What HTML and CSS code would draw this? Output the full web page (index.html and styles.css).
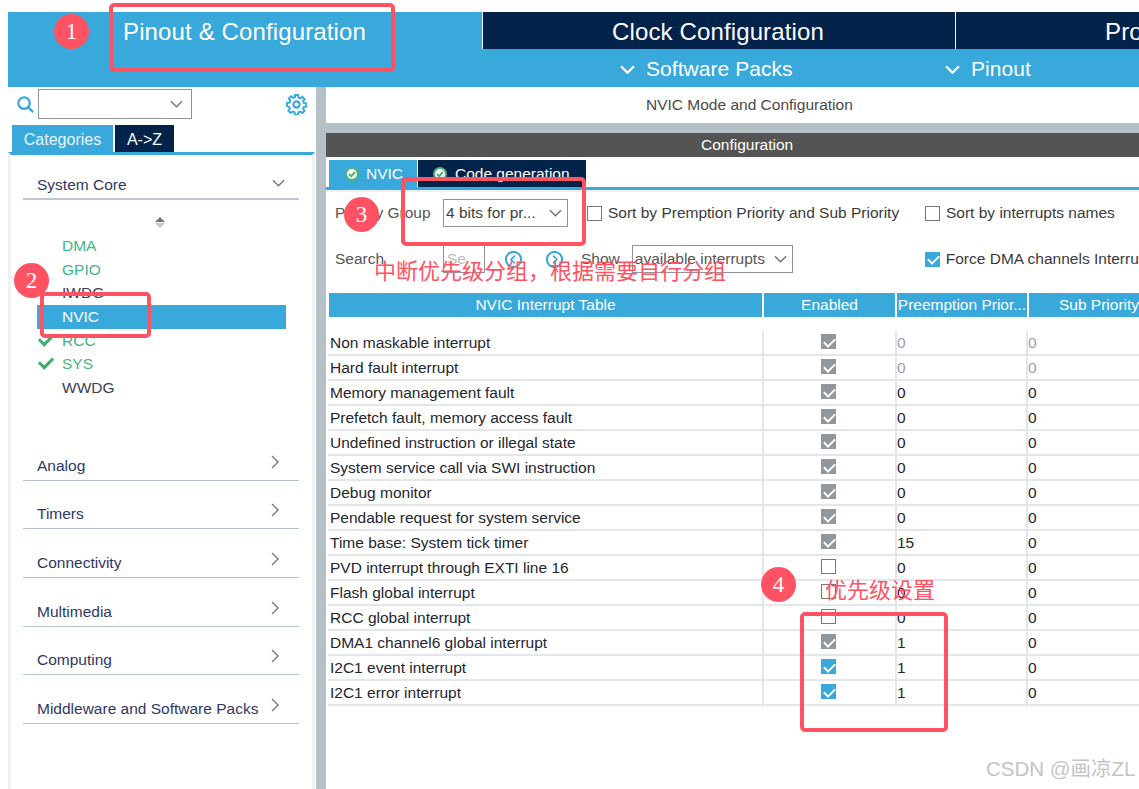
FILE: index.html
```html
<!DOCTYPE html>
<html lang="en">
<head>
    <meta charset="UTF-8">
    <meta name="viewport" content="width=device-width, initial-scale=1.0">
    <title>NVIC Mode and Configuration</title>
    <link rel="stylesheet" href="styles.css">
</head>
<body>
    <svg class="defs" width="0" height="0">
        <symbol id="chev-down" viewBox="0 0 14 8"><path d="M1 1l6 6 6-6" fill="none" stroke="currentColor"/></symbol>
        <symbol id="chev-right" viewBox="0 0 8 14"><path d="M1 1l6 6-6 6" fill="none" stroke="currentColor"/></symbol>
        <symbol id="ok" viewBox="0 0 14 14"><circle cx="7" cy="7" r="6" fill="#fff" stroke="#4cb27a" stroke-width="2"/><path d="M4 7l2.2 2.2L10 5" fill="none" stroke="#4cb27a" stroke-width="2"/></symbol>
    </svg>

    <header class="topbar">
        <nav class="main-tabs">
            <div class="main-tab active">Pinout &amp; Configuration</div>
            <div class="main-tab clock">Clock Configuration</div>
            <div class="main-tab project">Project Manager</div>
        </nav>
        <div class="sub-menu">
            <div class="sub-item packs"><svg class="sub-chev"><use href="#chev-down"/></svg>Software Packs</div>
            <div class="sub-item"><svg class="sub-chev"><use href="#chev-down"/></svg>Pinout</div>
        </div>
    </header>

    <div class="workspace">
        <aside class="sidebar">
            <div class="search-row">
                <svg class="search-icon" viewBox="0 0 20 20"><circle cx="8.5" cy="8.5" r="6" fill="none" stroke="#39a9dc" stroke-width="2.4"/><path d="M13 13l5 5" stroke="#39a9dc" stroke-width="2.4"/></svg>
                <div class="search-box"><svg class="chev"><use href="#chev-down"/></svg></div>
                <svg class="gear" viewBox="0 0 20 20"><path d="M8.5 1h3l.4 2.4 1.7.7 2-1.400 2.100 2.100-1.400 2 .7 1.700 2.400.4v3l-2.400.4-.7 1.700 1.400 2-2.100 2.100-2-1.400-1.700.7-.4 2.400h-3l-.4-2.400-1.700-.7-2 1.400-2.100-2.100 1.400-2-.7-1.700L1 11.500v-3l2.400-.4.7-1.700-1.400-2 2.100-2.100 2 1.400 1.700-.7z" fill="none" stroke="#39a9dc" stroke-width="1.900"/><circle cx="10" cy="10" r="3" fill="none" stroke="#39a9dc" stroke-width="2"/></svg>
            </div>
            <div class="side-tabs">
                <div class="side-tab active">Categories</div>
                <div class="side-tab">A-&gt;Z</div>
            </div>
            <div class="side-panel">
                <div class="group open">
                    <span>System Core</span>
                    <svg class="chev"><use href="#chev-down"/></svg>
                </div>
                <div class="sort-arrows"></div>
                <ul class="periph-list">
                    <li class="ready">DMA</li>
                    <li class="ready">GPIO</li>
                    <li>IWDG</li>
                    <li class="selected">NVIC</li>
                    <li class="ready checked">RCC</li>
                    <li class="ready checked">SYS</li>
                    <li>WWDG</li>
                </ul>
                <div class="group"><span>Analog</span><svg class="chev-r"><use href="#chev-right"/></svg></div>
                <div class="group"><span>Timers</span><svg class="chev-r"><use href="#chev-right"/></svg></div>
                <div class="group"><span>Connectivity</span><svg class="chev-r"><use href="#chev-right"/></svg></div>
                <div class="group"><span>Multimedia</span><svg class="chev-r"><use href="#chev-right"/></svg></div>
                <div class="group"><span>Computing</span><svg class="chev-r"><use href="#chev-right"/></svg></div>
                <div class="group"><span>Middleware and Software Packs</span><svg class="chev-r"><use href="#chev-right"/></svg></div>
            </div>
        </aside>

        <main class="content">
            <div class="mode-title">NVIC Mode and Configuration</div>
            <div class="config-title">Configuration</div>
            <div class="config-tabs">
                <div class="config-tab active"><svg class="ok"><use href="#ok"/></svg>NVIC</div>
                <div class="config-tab code"><svg class="ok"><use href="#ok"/></svg>Code generation</div>
            </div>
            <div class="form-row first">
                <label class="form-label">Priority Group</label>
                <div class="select group-select">4 bits for pr...<svg class="chev"><use href="#chev-down"/></svg></div>
                <span class="check off sort-a"></span><span class="check-text sort-a-text">Sort by Premption Priority and Sub Priority</span>
                <span class="check off"></span><span class="check-text">Sort by interrupts names</span>
            </div>
            <div class="form-row second">
                <label class="form-label">Search</label>
                <div class="search-input">Se</div>
                <svg class="nav-btn first-nav" viewBox="0 0 20 20"><circle cx="10" cy="10" r="8" fill="none" stroke="#39a9dc" stroke-width="2.200"/><path d="M11.500 6l-4 4 4 4" fill="none" stroke="#39a9dc" stroke-width="1.800"/></svg>
                <svg class="nav-btn" viewBox="0 0 20 20"><circle cx="10" cy="10" r="8" fill="none" stroke="#39a9dc" stroke-width="2.200"/><path d="M8.500 6l4 4-4 4" fill="none" stroke="#39a9dc" stroke-width="1.800"/></svg>
                <label class="show-label">Show</label>
                <div class="select show-select">available interrupts<svg class="chev"><use href="#chev-down"/></svg></div>
                <span class="check blue force"></span><span class="check-text">Force DMA channels Interrupts</span>
            </div>

            <div class="nvic-head">
                <div>NVIC Interrupt Table</div>
                <div>Enabled</div>
                <div>Preemption Prior...</div>
                <div>Sub Priority</div>
            </div>
            <div class="nvic-table">
                <div class="nvic-row"><div>Non maskable interrupt</div><div><span class="check grey"></span></div><div class="num dim">0</div><div class="num dim">0</div></div>
                <div class="nvic-row"><div>Hard fault interrupt</div><div><span class="check grey"></span></div><div class="num dim">0</div><div class="num dim">0</div></div>
                <div class="nvic-row"><div>Memory management fault</div><div><span class="check grey"></span></div><div class="num">0</div><div class="num">0</div></div>
                <div class="nvic-row"><div>Prefetch fault, memory access fault</div><div><span class="check grey"></span></div><div class="num">0</div><div class="num">0</div></div>
                <div class="nvic-row"><div>Undefined instruction or illegal state</div><div><span class="check grey"></span></div><div class="num">0</div><div class="num">0</div></div>
                <div class="nvic-row"><div>System service call via SWI instruction</div><div><span class="check grey"></span></div><div class="num">0</div><div class="num">0</div></div>
                <div class="nvic-row"><div>Debug monitor</div><div><span class="check grey"></span></div><div class="num">0</div><div class="num">0</div></div>
                <div class="nvic-row"><div>Pendable request for system service</div><div><span class="check grey"></span></div><div class="num">0</div><div class="num">0</div></div>
                <div class="nvic-row"><div>Time base: System tick timer</div><div><span class="check grey"></span></div><div class="num">15</div><div class="num">0</div></div>
                <div class="nvic-row"><div>PVD interrupt through EXTI line 16</div><div><span class="check off"></span></div><div class="num">0</div><div class="num">0</div></div>
                <div class="nvic-row"><div>Flash global interrupt</div><div><span class="check off"></span></div><div class="num">0</div><div class="num">0</div></div>
                <div class="nvic-row"><div>RCC global interrupt</div><div><span class="check off"></span></div><div class="num">0</div><div class="num">0</div></div>
                <div class="nvic-row"><div>DMA1 channel6 global interrupt</div><div><span class="check grey"></span></div><div class="num">1</div><div class="num">0</div></div>
                <div class="nvic-row"><div>I2C1 event interrupt</div><div><span class="check blue"></span></div><div class="num">1</div><div class="num">0</div></div>
                <div class="nvic-row"><div>I2C1 error interrupt</div><div><span class="check blue"></span></div><div class="num">1</div><div class="num">0</div></div>
            </div>
        </main>
    </div>

    <!-- annotations drawn on top of the screenshot -->
    <div class="mark box-1"></div>
    <div class="mark box-2"></div>
    <div class="mark box-3"></div>
    <div class="mark box-4"></div>
    <div class="badge badge-1">1</div>
    <div class="badge badge-2">2</div>
    <div class="badge badge-3">3</div>
    <div class="badge badge-4">4</div>
    <div class="note note-3">中断优先级分组，根据需要自行分组</div>
    <div class="note note-4">优先级设置</div>
    <div class="watermark">CSDN @画凉ZL</div>
</body>
</html>
```

FILE: styles.css
```css
* {
    box-sizing: border-box;
}
html, body {
    height: 100%;
}
body {
    margin: 0;
    padding: 12px 0 0 8px;
    position: relative;
    overflow: hidden;
    background: #fff;
    color: #2d3142;
    font-family: "Liberation Sans", Arial, sans-serif;
    font-size: 15.5px;
    display: flex;
    flex-direction: column;
}
.defs {
    position: absolute;
}

/* top bar */
.topbar {
    flex: none;
    height: 75px;
    background: #39a9dc;
    color: #fff;
    white-space: nowrap;
}
.main-tabs {
    display: flex;
    height: 37px;
}
.main-tab {
    flex: none;
    width: 473px;
    border-left: 1px solid #fff;
    background: #03234b;
    font-size: 24px;
    letter-spacing: 0.13px;
    line-height: 40px;
    text-align: center;
}
.main-tab.active {
    width: 474px;
    border-left: 0;
    background: #39a9dc;
    padding-left: 115px;
    text-align: left;
}
.main-tab.clock {
    padding-right: 2px;
}
.main-tab.project {
    text-align: left;
    padding-left: 149px;
    width: 400px;
}
.sub-menu {
    display: flex;
    height: 38px;
    align-items: center;
    padding: 2px 0 0 612px;
    font-size: 21px;
    letter-spacing: 0.05px;
}
.sub-item {
    display: flex;
    align-items: center;
}
.sub-item.packs {
    width: 325px;
}
.sub-chev {
    width: 15px;
    height: 9px;
    margin-right: 11px;
    color: #fff;
    stroke-width: 2.2;
}

.workspace {
    flex: 1;
    display: flex;
    min-height: 0;
}

/* left side */
.sidebar {
    flex: none;
    width: 308px;
    display: flex;
    flex-direction: column;
}
.search-row {
    flex: none;
    height: 38px;
    display: flex;
    align-items: center;
    padding: 0 7px 4px 8px;
}
.search-icon {
    width: 19px;
    height: 19px;
    margin-right: 3px;
}
.search-box {
    width: 154px;
    height: 30px;
    border: 1px solid #8e9499;
    display: flex;
    align-items: center;
    justify-content: flex-end;
    padding-right: 8px;
}
.chev {
    flex: none;
    width: 13px;
    height: 8px;
    color: #6d7277;
    stroke-width: 1.4;
}
.gear {
    width: 21px;
    height: 21px;
    margin-left: auto;
    margin-right: 2px;
}
.side-tabs {
    flex: none;
    display: flex;
    height: 27px;
    padding-left: 4px;
    gap: 2px;
    font-size: 16px;
    line-height: 29px;
    color: #fff;
}
.side-tab {
    width: 59px;
    text-align: center;
    background: #03234b;
}
.side-tab.active {
    width: 101px;
    background: #39a9dc;
    color: #e8f5fb;
}
.side-panel {
    flex: 1;
    border-top: 3px solid #39a9dc;
    border-left: 3px solid #f0f0f0;
    border-right: 3px solid #f0f0f0;
    padding: 0 13px 0 12px;
    margin-right: 1px;
}
.group {
    height: 48.7px;
    border-bottom: 1px solid #b5c0d0;
    display: flex;
    align-items: flex-end;
    justify-content: space-between;
    padding: 0 20px 4px 14px;
    color: #2f3768;
    line-height: 20px;
}
.group.open {
    height: 45px;
    border-bottom: 2px solid #b8c6de;
    padding: 0 14px 3px 14px;
}
.group .chev {
    margin-bottom: 8px;
    color: #777;
}
.chev-r {
    flex: none;
    width: 8px;
    height: 14px;
    margin-bottom: 7px;
    color: #777;
    stroke-width: 1.4;
}
.sort-arrows {
    height: 34px;
    position: relative;
}
.sort-arrows::before, .sort-arrows::after {
    content: "";
    position: absolute;
    left: 132px;
    border: 5px solid transparent;
    border-top-width: 0;
    border-bottom: 5px solid #70757a;
    top: 17px;
}
.sort-arrows::after {
    top: 23px;
    border-bottom-width: 0;
    border-top: 5px solid #c4c8cb;
}
.periph-list {
    list-style: none;
    margin: 0 0 32px;
    padding: 0 0 0 14px;
    width: 263px;
}
.periph-list li {
    height: 23.7px;
    line-height: 24px;
    padding-left: 25px;
    color: #3b3f55;
    position: relative;
}
.periph-list li.ready {
    color: #3fb585;
}
.periph-list li.selected {
    background: #39a9dc;
    color: #fff;
}
.periph-list li.checked::before {
    content: "";
    position: absolute;
    left: 2px;
    top: 5px;
    width: 11px;
    height: 6px;
    border-left: 3px solid #3fae70;
    border-bottom: 3px solid #3fae70;
    transform: rotate(-45deg);
}

/* right side */
.content {
    flex: 1;
    min-width: 0;
    border-left: 10px solid #b5c0c7;
    display: flex;
    flex-direction: column;
    white-space: nowrap;
}
.mode-title {
    flex: none;
    height: 36px;
    line-height: 36px;
    padding-left: 320px;
    color: #4a4a4a;
}
.config-title {
    flex: none;
    height: 34px;
    border-top: 10px solid #b5c0c7;
    background: #535453;
    color: #fff;
    line-height: 24px;
    padding-left: 375px;
}
.config-tabs {
    flex: none;
    display: flex;
    height: 33px;
    padding: 3px 0 0 3px;
    border-bottom: 3px solid #39a9dc;
    line-height: 29px;
    color: #fff;
    background: #fff;
}
.config-tab {
    width: 88px;
    height: 27px;
    background: #39a9dc;
    display: flex;
    align-items: center;
    padding-left: 16px;
}
.config-tab.code {
    width: 168px;
    margin-left: 1px;
    background: #03234b;
    padding-left: 15px;
}
.ok {
    width: 14px;
    height: 14px;
    margin-right: 7px;
    flex: none;
}
.config-tab.code .ok {
    margin-right: 8px;
}
.form-row {
    flex: none;
    display: flex;
    align-items: center;
    padding-left: 9px;
    color: #3a3a3a;
}
.form-row > * {
    flex: none;
}
.form-row.first {
    height: 44px;
    border-top: 2px solid #eef0f2;
}
.form-row.second {
    height: 50px;
}
.form-label {
    width: 108px;
    color: #555;
}
.select {
    height: 28px;
    border: 1px solid #8e9499;
    display: flex;
    align-items: center;
    justify-content: space-between;
    padding: 0 5px 0 2px;
    color: #404040;
}
.group-select {
    width: 125px;
}
.show-select {
    width: 161px;
    margin-left: 12px;
    color: #555;
}
.search-input {
    width: 42px;
    height: 28px;
    border: 1px solid #8e9499;
    border-top-color: #ddd;
    color: #bbb;
    padding: 4px 0 0 3px;
}
.nav-btn {
    width: 19px;
    height: 19px;
    margin-left: 22px;
}
.first-nav {
    margin-left: 19px;
}
.show-label {
    margin-left: 17px;
    color: #555;
}
.check {
    flex: none;
    display: inline-block;
    width: 15px;
    height: 15px;
    position: relative;
    vertical-align: top;
}
.check.off {
    border: 1.5px solid #777;
    background: #fff;
}
.check.grey {
    background: #90989e;
}
.check.blue {
    background: #39a9dc;
}
.check.grey::after, .check.blue::after {
    content: "";
    position: absolute;
    left: 3px;
    top: 3.5px;
    width: 9px;
    height: 5px;
    border-left: 2px solid #fff;
    border-bottom: 2px solid #fff;
    transform: rotate(-45deg);
}
.check-text {
    margin-left: 6px;
}
.sort-a {
    margin-left: 19px;
}
.sort-a-text {
    width: 317px;
}
.force {
    margin-left: 132px;
}
.nvic-head {
    flex: none;
    display: grid;
    grid-template-columns: 433px 131px 130px 140px;
    gap: 2px;
    height: 24px;
    margin: 9px 0 0 3px;
    color: #fff;
    line-height: 24px;
    text-align: center;
}
.nvic-head div {
    background: #39a9dc;
    overflow: hidden;
}
.nvic-table {
    margin-top: 14px;
    padding-left: 2px;
}
.nvic-row {
    display: grid;
    grid-template-columns: 434px 133px 131px 1fr;
    height: 25px;
    border-bottom: 2px solid #e3e6ea;
    line-height: 23px;
}
.nvic-row > div {
    padding-left: 2px;
    color: #24262f;
}
.nvic-row > div + div {
    border-left: 2px solid #e3e6ea;
    padding-left: 0;
}
.nvic-row > div:nth-child(2) {
    padding: 3px 2px 0 0;
    text-align: center;
}
.nvic-row .num.dim {
    color: #9aa0a6;
}

/* annotations */
.mark {
    position: absolute;
    border: 4px solid #ff5364;
    border-radius: 5px;
}
.box-1 { left: 109px; top: 3px; width: 286px; height: 69px; }
.box-2 { left: 40px; top: 292px; width: 111px; height: 46px; }
.box-3 { left: 401px; top: 177px; width: 185px; height: 69px; }
.box-4 { left: 800px; top: 612px; width: 148px; height: 120px; }
.badge {
    position: absolute;
    width: 35px;
    height: 35px;
    border-radius: 50%;
    background: #ff5364;
    color: #fff;
    font-family: "Liberation Serif", serif;
    font-size: 23px;
    line-height: 35px;
    text-align: center;
}
.badge-1 { left: 54px; top: 14px; }
.badge-2 { left: 14px; top: 263px; }
.badge-3 { left: 344px; top: 197px; }
.badge-4 { left: 761px; top: 567px; }
.note {
    position: absolute;
    color: #ff5364;
    font-family: "Noto Sans CJK SC", sans-serif;
    font-size: 22px;
    line-height: 26px;
    white-space: nowrap;
}
.note-3 { left: 374px; top: 256px; }
.note-4 { left: 825px; top: 575px; }
.watermark {
    position: absolute;
    left: 986px;
    top: 756px;
    color: #c4c4c4;
    font-family: "Liberation Sans", "Noto Sans CJK SC", sans-serif;
    font-size: 20.5px;
    line-height: 26px;
    white-space: nowrap;
}
```
